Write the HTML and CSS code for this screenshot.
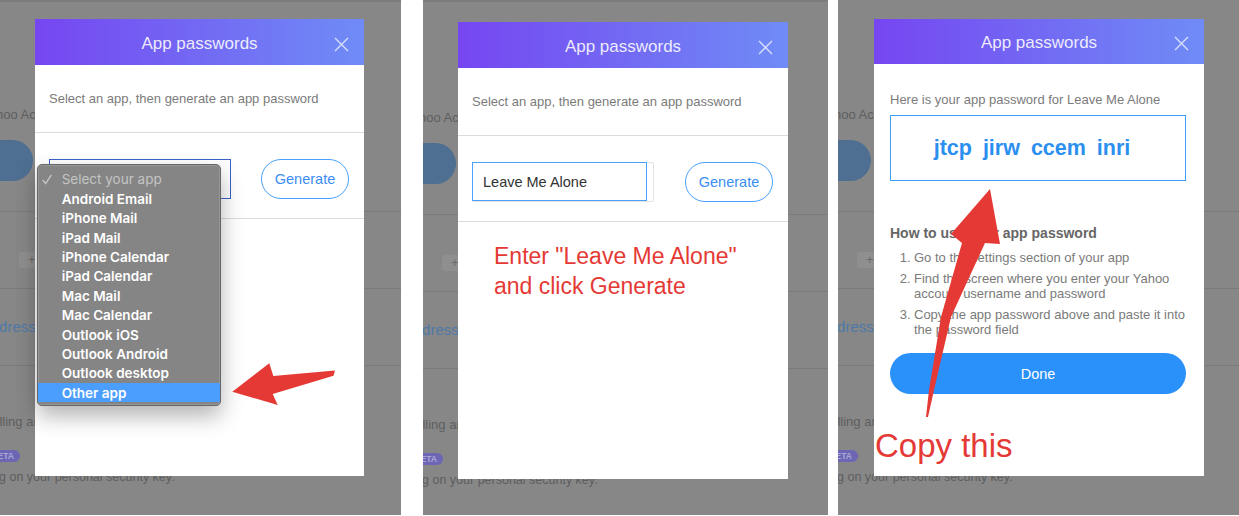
FILE: index.html
```html
<!DOCTYPE html>
<html>
<head>
<meta charset="utf-8">
<link rel="stylesheet" href="styles.css">
</head>
<body>
<div class="strip">

  <section class="panel p1">
    <div class="bg">
      <div class="bg-band"></div>
      <div class="bg-title">Yahoo Account Security</div>
      <div class="bg-btn"></div>
      <div class="bg-rule"></div>
      <div class="bg-plus">+</div>
      <div class="bg-rule r2"></div>
      <div class="bg-link">Add email address</div>
      <div class="bg-rule r3"></div>
      <div class="bg-text2">Enrolling and removing keys</div>
      <div class="bg-badge">BETA</div>
      <div class="bg-text3">tapping on your personal security key.</div>
    </div>
    <div class="modal m1">
      <div class="mhead">
        <div class="mtitle">App passwords</div>
        <svg class="mclose" viewBox="0 0 15 15"><path d="M1 1L14 14M14 1L1 14" stroke="rgba(255,255,255,.75)" stroke-width="1.3" fill="none"/></svg>
      </div>
      <div class="msub">Select an app, then generate an app password</div>
      <div class="mrow">
        <div class="select"></div>
        <div class="gen">Generate</div>
      </div>
    </div>
    <div class="menu">
      <div class="mi dim"><svg class="check" viewBox="0 0 10 11"><polyline points="0.6,6 3.6,9.6 9.4,0.8" fill="none" stroke="#c6c6c6" stroke-width="1.4"/></svg>Select your app</div>
      <div class="mi">Android Email</div>
      <div class="mi">iPhone Mail</div>
      <div class="mi">iPad Mail</div>
      <div class="mi">iPhone Calendar</div>
      <div class="mi">iPad Calendar</div>
      <div class="mi">Mac Mail</div>
      <div class="mi">Mac Calendar</div>
      <div class="mi">Outlook iOS</div>
      <div class="mi">Outlook Android</div>
      <div class="mi">Outlook desktop</div>
      <div class="mi sel">Other app</div>
    </div>
    <svg class="arrow" width="401" height="515" viewBox="0 0 401 515"><polygon points="232.3,391.7 269.3,363.3 273.3,376 335,370.5 333.5,375.8 272.7,394 277.7,405" fill="#e53935"/></svg>
  </section>

  <section class="panel p2">
    <div class="bg">
      <div class="bg-band"></div>
      <div class="bg-title">Yahoo Account Security</div>
      <div class="bg-btn"></div>
      <div class="bg-rule"></div>
      <div class="bg-plus">+</div>
      <div class="bg-rule r2"></div>
      <div class="bg-link">Add email address</div>
      <div class="bg-rule r3"></div>
      <div class="bg-text2">Enrolling and removing keys</div>
      <div class="bg-badge">BETA</div>
      <div class="bg-text3">tapping on your personal security key.</div>
    </div>
    <div class="modal m2">
      <div class="mhead">
        <div class="mtitle">App passwords</div>
        <svg class="mclose" viewBox="0 0 15 15"><path d="M1 1L14 14M14 1L1 14" stroke="rgba(255,255,255,.75)" stroke-width="1.3" fill="none"/></svg>
      </div>
      <div class="msub">Select an app, then generate an app password</div>
      <div class="mrow">
        <div class="field"><div class="field-input">Leave Me Alone</div></div>
        <div class="gen">Generate</div>
      </div>
      <div class="note">Enter "Leave Me Alone"<br>and click Generate</div>
    </div>
  </section>

  <section class="panel p3">
    <div class="bg">
      <div class="bg-band"></div>
      <div class="bg-title">Yahoo Account Security</div>
      <div class="bg-btn"></div>
      <div class="bg-rule"></div>
      <div class="bg-plus">+</div>
      <div class="bg-rule r2"></div>
      <div class="bg-link">Add email address</div>
      <div class="bg-rule r3"></div>
      <div class="bg-text2">Enrolling and removing keys</div>
      <div class="bg-badge">BETA</div>
      <div class="bg-text3">tapping on your personal security key.</div>
    </div>
    <div class="modal m3">
      <div class="mhead">
        <div class="mtitle">App passwords</div>
        <svg class="mclose" viewBox="0 0 15 15"><path d="M1 1L14 14M14 1L1 14" stroke="rgba(255,255,255,.75)" stroke-width="1.3" fill="none"/></svg>
      </div>
      <div class="m3body">
        <div class="m3sub">Here is your app password for Leave Me Alone</div>
        <div class="pwbox">jtcp jirw ccem inri</div>
        <div class="howto">How to use your app password</div>
        <div class="steps">
          <div class="step"><span class="num">1.</span><span class="stxt">Go to the settings section of your app</span></div>
          <div class="step"><span class="num">2.</span><span class="stxt">Find the screen where you enter your Yahoo<br>account username and password</span></div>
          <div class="step"><span class="num">3.</span><span class="stxt">Copy the app password above and paste it into<br>the password field</span></div>
        </div>
        <div class="done">Done</div>
      </div>
    </div>
    <svg class="arrow" width="401" height="515" viewBox="0 0 401 515"><polygon points="152,189 162,244 147,243 113,317 96,390 90,417 88,417 91,390 103,317 124,243 113,234" fill="#e53935"/></svg>
    <div class="copy">Copy this</div>
  </section>

</div>
</body>
</html>
```

FILE: styles.css
```css
* { box-sizing: border-box; }

body {
  margin: 0;
  width: 1239px;
  height: 516px;
  overflow: hidden;
  background: #fff;
  font-family: "Liberation Sans", Arial, sans-serif;
}

.strip { display: flex; }

.panel {
  position: relative;
  flex: none;
  height: 515px;
  background: #878787;
  overflow: hidden;
}
.p1 { width: 401px; margin-right: 22px; }
.p2 { width: 405px; margin-right: 10px; }
.p3 { width: 401px; }

/* dimmed page behind the dialog */
.bg {
  display: flex;
  flex-direction: column;
  align-items: flex-start;
}
.bg-band { align-self: stretch; height: 2px; background: #7c7c7c; }
.p3 .bg-band { background: transparent; }
.bg-title {
  margin-top: 105px;
  margin-left: -19px;
  font-size: 13px;
  line-height: 16px;
  color: #5e5e5e;
  white-space: nowrap;
}
.p2 .bg-title { margin-top: 108px; }
.bg-btn {
  margin-top: 17px;
  margin-left: -87px;
  width: 120px;
  height: 41px;
  border-radius: 21px;
  background: #4e6f91;
}
.bg-rule { align-self: stretch; height: 1px; background: #7a7a7a; margin-top: 30px; }
.bg-rule.r2 { margin-top: 20px; }
.bg-rule.r3 { margin-top: 29px; }
.bg-plus {
  margin-top: 40px;
  margin-left: 19px;
  width: 34px;
  height: 16px;
  padding-left: 9px;
  border-radius: 3px;
  background: #8f8f8f;
  color: #6b6b6b;
  font-size: 13px;
  line-height: 16px;
}
.bg-link {
  margin-top: 29px;
  margin-left: -88.5px;
  font-size: 15px;
  line-height: 18px;
  color: #4e79a9;
  white-space: nowrap;
}
.bg-text2 {
  margin-top: 48px;
  margin-left: -28px;
  font-size: 13px;
  line-height: 16px;
  color: #5e5e5e;
  white-space: nowrap;
}
.bg-badge {
  margin-top: 20px;
  margin-left: -14px;
  width: 34px;
  height: 12px;
  padding-right: 6px;
  border-radius: 6px;
  background: #6d66b4;
  color: #a9a5d8;
  font-size: 8.5px;
  font-weight: bold;
  line-height: 12px;
  text-align: right;
}
.bg-text3 {
  margin-top: 7px;
  margin-left: -35px;
  font-size: 12.5px;
  line-height: 16px;
  color: #5e5e5e;
  white-space: nowrap;
}

/* dialog */
.modal {
  position: absolute;
  display: flex;
  flex-direction: column;
  background: #fff;
}
.m1 { left: 35px; top: 19px; width: 329px; height: 457px; }
.m2 { left: 35px; top: 22px; width: 330px; height: 457px; }
.m3 { left: 36px; top: 19px; width: 330px; height: 457px; }

.mhead {
  flex: none;
  height: 46px;
  display: grid;
  grid-template-columns: 1fr auto 1fr;
  align-items: center;
  background: linear-gradient(90deg, #7646f1, #6f8cf6);
}
.m3 .mhead { height: 45px; }
.mtitle {
  grid-column: 2;
  padding-top: 3px;
  font-size: 17px;
  color: rgba(255, 255, 255, .88);
  white-space: nowrap;
}
.mclose {
  grid-column: 3;
  justify-self: end;
  margin-right: 15px;
  margin-top: 4px;
  width: 15px;
  height: 15px;
  display: block;
}

.msub {
  padding: 26px 14px 25px;
  font-size: 13px;
  line-height: 16px;
  color: #7b7b7b;
  border-bottom: 1px solid #dcdcdc;
}
.mrow {
  display: flex;
  justify-content: space-between;
  align-items: center;
  padding: 26px 15px 19px 14px;
  border-bottom: 1px solid #dcdcdc;
}
.select {
  width: 182px;
  height: 40px;
  border: 1px solid #3a62c9;
}
.gen {
  width: 88px;
  height: 40px;
  border: 1.5px solid #48a0fc;
  border-radius: 20px;
  display: flex;
  align-items: center;
  justify-content: center;
  color: #3a8ef2;
  font-size: 14.5px;
}
.field {
  width: 182px;
  height: 40px;
  border: 1px solid #e3e3e3;
  border-radius: 2px;
}
.field-input {
  width: 175px;
  height: 39px;
  margin: -1px;
  padding-left: 10px;
  border: 1.5px solid #4aa1fb;
  display: flex;
  align-items: center;
  color: #333;
  font-size: 14.5px;
}
.note {
  padding: 19px 0 0 36px;
  color: #e53935;
  font-size: 23px;
  line-height: 30px;
}

.m3body {
  display: flex;
  flex-direction: column;
  padding: 0 18px 0 16px;
}
.m3sub {
  margin-top: 28px;
  font-size: 13px;
  line-height: 16px;
  color: #7b7b7b;
}
.pwbox {
  margin-top: 7px;
  height: 66px;
  padding-right: 12px;
  border: 1.5px solid #3d9cf6;
  display: flex;
  align-items: center;
  justify-content: center;
  color: #2b8ff0;
  font-size: 21.5px;
  font-weight: bold;
  word-spacing: 5px;
}
.howto {
  margin-top: 44px;
  font-size: 14px;
  line-height: 17px;
  font-weight: bold;
  color: #666;
}
.steps {
  margin-top: 8.5px;
  display: flex;
  flex-direction: column;
  gap: 7.2px;
  font-size: 13px;
  line-height: 14.5px;
  color: #7a7a7a;
}
.step { display: flex; }
.num {
  flex: none;
  width: 24px;
  padding-right: 3.5px;
  text-align: right;
}
.stxt { white-space: nowrap; }
.done {
  margin-top: 15.5px;
  height: 41px;
  padding-top: 2px;
  border-radius: 21px;
  background: #2a90fa;
  display: flex;
  align-items: center;
  justify-content: center;
  color: #fff;
  font-size: 14.5px;
}

/* native select menu */
.menu {
  position: absolute;
  left: 37px;
  top: 164px;
  width: 184px;
  height: 242px;
  padding-top: 4.7px;
  border: 1px solid #666;
  border-radius: 5px;
  background: #858585;
  box-shadow: 0 10px 22px rgba(0, 0, 0, .3), inset 0 0 0 1px rgba(255, 255, 255, .14);
  font-family: Inter, "Liberation Sans", sans-serif;
  font-size: 13.5px;
  font-weight: 600;
  color: #fff;
  overflow: hidden;
}
.mi {
  height: 19.4px;
  display: flex;
  align-items: center;
  padding-left: 23.7px;
  white-space: nowrap;
}
.mi.dim {
  padding-left: 4px;
  color: #c4c4c4;
  font-weight: 400;
}
.check {
  width: 10px;
  height: 11px;
  margin-right: 9.7px;
  display: block;
}
.mi.sel { background: #4b9efd; }

/* annotations */
.arrow {
  position: absolute;
  left: 0;
  top: 0;
}
.copy {
  position: absolute;
  left: 37px;
  top: 429px;
  color: #e53935;
  font-size: 33px;
  line-height: 33px;
  white-space: nowrap;
}
```
